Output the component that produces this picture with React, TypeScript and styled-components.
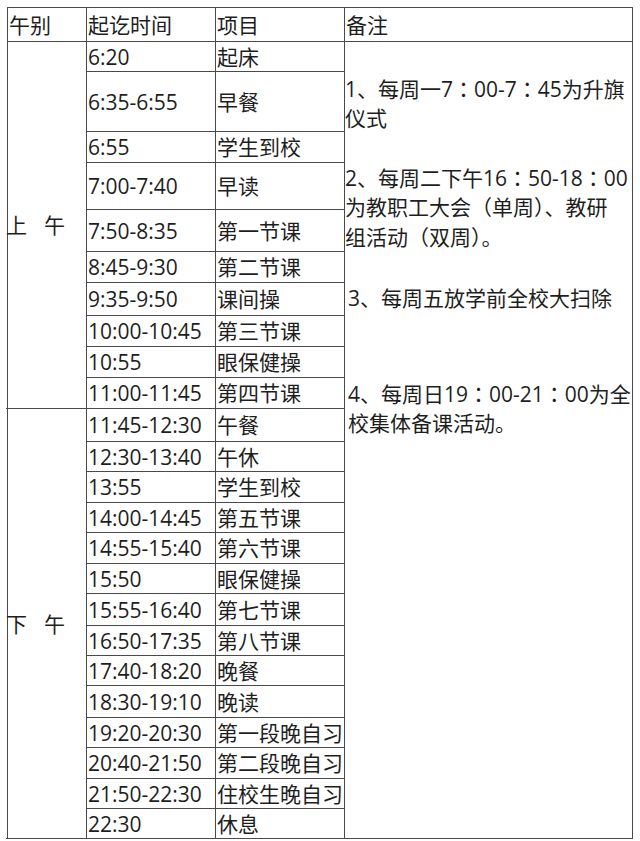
import React from "react";
import styled, { createGlobalStyle } from "styled-components";

const GlobalStyle = createGlobalStyle`
  html, body {
    margin: 0;
    padding: 0;
    background: #ffffff;
  }
  body {
    font-family: "Open Sans", "Noto Sans CJK SC", sans-serif;
    color: #1e1e1e;
  }
`;

type Row = { time: string; item: string; h: number };

const morning: Row[] = [
  { time: "6:20", item: "起床", h: 30 },
  { time: "6:35-6:55", item: "早餐", h: 60 },
  { time: "6:55", item: "学生到校", h: 31 },
  { time: "7:00-7:40", item: "早读", h: 47 },
  { time: "7:50-8:35", item: "第一节课", h: 42 },
  { time: "8:45-9:30", item: "第二节课", h: 31 },
  { time: "9:35-9:50", item: "课间操", h: 33 },
  { time: "10:00-10:45", item: "第三节课", h: 31 },
  { time: "10:55", item: "眼保健操", h: 31 },
  { time: "11:00-11:45", item: "第四节课", h: 31 },
];

const afternoon: Row[] = [
  { time: "11:45-12:30", item: "午餐", h: 33 },
  { time: "12:30-13:40", item: "午休", h: 30 },
  { time: "13:55", item: "学生到校", h: 31 },
  { time: "14:00-14:45", item: "第五节课", h: 30 },
  { time: "14:55-15:40", item: "第六节课", h: 31 },
  { time: "15:50", item: "眼保健操", h: 30 },
  { time: "15:55-16:40", item: "第七节课", h: 32 },
  { time: "16:50-17:35", item: "第八节课", h: 30 },
  { time: "17:40-18:20", item: "晚餐", h: 30 },
  { time: "18:30-19:10", item: "晚读", h: 32 },
  { time: "19:20-20:30", item: "第一段晚自习", h: 30 },
  { time: "20:40-21:50", item: "第二段晚自习", h: 31 },
  { time: "21:50-22:30", item: "住校生晚自习", h: 30 },
  { time: "22:30", item: "休息", h: 30 },
];

const notes: { lines: string[]; gap: number; indent: number }[] = [
  { lines: ["1、每周一7：00-7：45为升旗", "仪式"], gap: 0, indent: 0 },
  {
    lines: ["2、每周二下午16：50-18：00", "为教职工大会（单周）、教研", "组活动（双周）。"],
    gap: 29,
    indent: 0,
  },
  { lines: ["3、每周五放学前全校大扫除"], gap: 31, indent: 3 },
  { lines: ["4、每周日19：00-21：00为全", "校集体备课活动。"], gap: 65, indent: 3 },
];

const Page = styled.div`
  padding: 7px 0 0 7px;
`;

const Grid = styled.div<{ $rows: string }>`
  display: grid;
  width: 626px;
  box-sizing: border-box;
  grid-template-columns: 79px 129px 129px 288px;
  grid-template-rows: ${(p) => p.$rows};
  border-top: 1px solid #4a4a4a;
  border-left: 1px solid #4a4a4a;
  font-size: 21px;
  line-height: 30px;
`;

const Cell = styled.div<{ $col: number; $row: number; $span?: number }>`
  grid-column: ${(p) => p.$col};
  grid-row: ${(p) => p.$row} / span ${(p) => p.$span ?? 1};
  box-sizing: border-box;
  border-right: 1px solid #4a4a4a;
  border-bottom: 1px solid #4a4a4a;
  padding-left: 1px;
  display: flex;
  align-items: center;
  white-space: nowrap;
  overflow: hidden;
`;

const PeriodCell = styled(Cell)`
  gap: 17px;
  padding-left: 0;
  margin-left: -2px;
`;

const NotesCell = styled(Cell)`
  flex-direction: column;
  align-items: stretch;
  justify-content: flex-start;
  padding-top: 31px;
  padding-left: 0;
`;

const Para = styled.div<{ $gap: number; $indent: number }>`
  margin-top: ${(p) => p.$gap}px;
  padding-left: ${(p) => p.$indent}px;
`;

const Line = styled.div`
  white-space: nowrap;
  height: 30px;
`;

const Colon = styled.span`
  font-family: "Noto Sans CJK TC", "Noto Sans CJK SC", sans-serif;
`;

function renderLine(text: string) {
  const parts = text.split("：");
  return parts.map((p, i) => (
    <React.Fragment key={i}>
      {p}
      {i < parts.length - 1 && <Colon>：</Colon>}
    </React.Fragment>
  ));
}

export default function App() {
  const all = [...morning, ...afternoon];
  const rows = ["34px", ...all.map((r) => `${r.h}px`)].join(" ");
  const firstMorning = 2;
  const firstAfternoon = 2 + morning.length;

  return (
    <>
      <GlobalStyle />
      <Page>
        <Grid $rows={rows}>
          <Cell $col={1} $row={1}>午别</Cell>
          <Cell $col={2} $row={1}>起讫时间</Cell>
          <Cell $col={3} $row={1}>项目</Cell>
          <Cell $col={4} $row={1}>备注</Cell>

          <PeriodCell $col={1} $row={firstMorning} $span={morning.length}>
            <span>上</span>
            <span>午</span>
          </PeriodCell>
          <PeriodCell $col={1} $row={firstAfternoon} $span={afternoon.length}>
            <span>下</span>
            <span>午</span>
          </PeriodCell>

          {all.map((r, i) => (
            <React.Fragment key={i}>
              <Cell $col={2} $row={i + 2}>{r.time}</Cell>
              <Cell $col={3} $row={i + 2}>{r.item}</Cell>
            </React.Fragment>
          ))}

          <NotesCell $col={4} $row={2} $span={all.length}>
            {notes.map((n, i) => (
              <Para key={i} $gap={n.gap} $indent={n.indent}>
                {n.lines.map((l, j) => (
                  <Line key={j}>{renderLine(l)}</Line>
                ))}
              </Para>
            ))}
          </NotesCell>
        </Grid>
      </Page>
    </>
  );
}
